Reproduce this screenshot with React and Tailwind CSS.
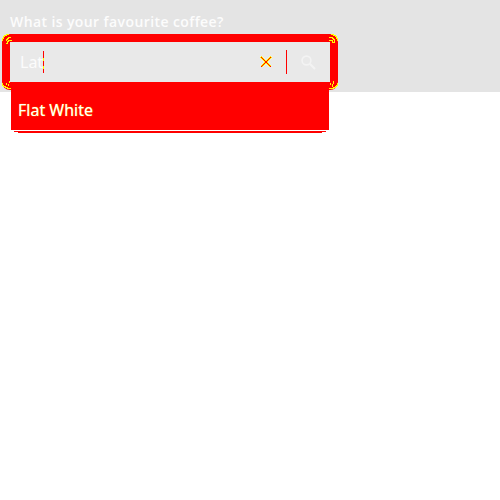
function SearchBox() {
  return (
    <div className="relative z-10 flex h-[56px] w-[336px] rounded-[8px] bg-[#ff0000] p-[8px]">
      <div className="flex h-[40px] w-[320px] items-center bg-[#e9e9e9] pl-[10px]">
        <span className="w-[23px] whitespace-nowrap text-[16px] leading-[40px] text-[#fcfcfc]">Lat</span>
        <svg className="h-[22px] w-px shrink-0" viewBox="0 0 1 22" shapeRendering="crispEdges">
          <path d="M0.5 0v22" stroke="#ff0000" />
          <path d="M0.5 7v3M0.5 15v3" stroke="#ffff00" />
        </svg>
        <svg className="ml-[216px] h-[12px] w-[12px] shrink-0" viewBox="0 0 12 12" shapeRendering="crispEdges">
          <path d="M1 1l10 10M11 1L1 11" stroke="#ffff00" strokeWidth="2.8" />
          <path d="M1 1l10 10M11 1L1 11" stroke="#ff0000" strokeWidth="1" />
          <path d="M5 5h2v2h-2z" fill="#ff0000" />
        </svg>
        <div className="ml-[14px] h-[24px] w-px bg-[#ff0000]" />
        <svg className="ml-[14px] h-[15px] w-[15px] shrink-0" viewBox="0 0 15 15" fill="none" stroke="#f3f3f3" strokeWidth="1.6">
          <circle cx="5.5" cy="5.5" r="4.4" />
          <path d="M9 9l5 5" strokeWidth="2.1" />
        </svg>
      </div>
      <CornerMarks />
      <div className="absolute left-[9px] top-[48px] w-[318px]">
        <div className="h-[48px] bg-[#ff0000] pl-[7px] text-[16px] leading-[56px] text-white [text-shadow:0_0_1px_#ffff00]">
          Flat White
        </div>
        <div className="h-px bg-white" />
        <div className="mx-[3px] h-px bg-[#ff0000]" />
        <div className="mx-[7px] h-px bg-[#ff0000]" />
      </div>
    </div>
  );
}

function CornerMarks() {
  return (
    <svg className="absolute left-0 top-0 h-[56px] w-[336px]" viewBox="0 0 336 56" fill="none" stroke="#ffff00" strokeWidth="1" shapeRendering="crispEdges">
      <path d="M0.5 7V4.5h1v-2h1v-1h2v-1H7" />
      <path d="M3.5 9.5h2v-2h1v-1h3M4.5 6.5v-1h1v-1h1v-1h2" />
      <path d="M329 0.5h2.5v1h2v1h1v2h1V7" />
      <path d="M327 3.5h3v1h1v1h1v3M327 6.5h3v2h2" />
      <path d="M0.5 49v2.5h1v1h2v1h2v1H9" />
      <path d="M4.5 49v2M6.5 50v2M7.5 47v2" />
      <path d="M335.5 49v2.5h-1v1h-1v1h-2v1H327" />
      <path d="M328.5 49v2M330.5 50v3M331.5 47v3" />
    </svg>
  );
}

export default function App() {
  return (
    <main className="h-[500px] w-[500px] overflow-hidden bg-white font-['Noto_Sans',sans-serif]">
      <section className="h-[92px] bg-[#e4e4e4] pl-[2px] pt-[10px]">
        <p className="h-[24px] whitespace-nowrap pl-[8px] font-['Open_Sans','Noto_Sans',sans-serif] text-[14px] font-semibold leading-[24px] tracking-[0.4px] text-[#fcfcfc]">
          What is your favourite coffee?
        </p>
        <SearchBox />
      </section>
    </main>
  );
}
